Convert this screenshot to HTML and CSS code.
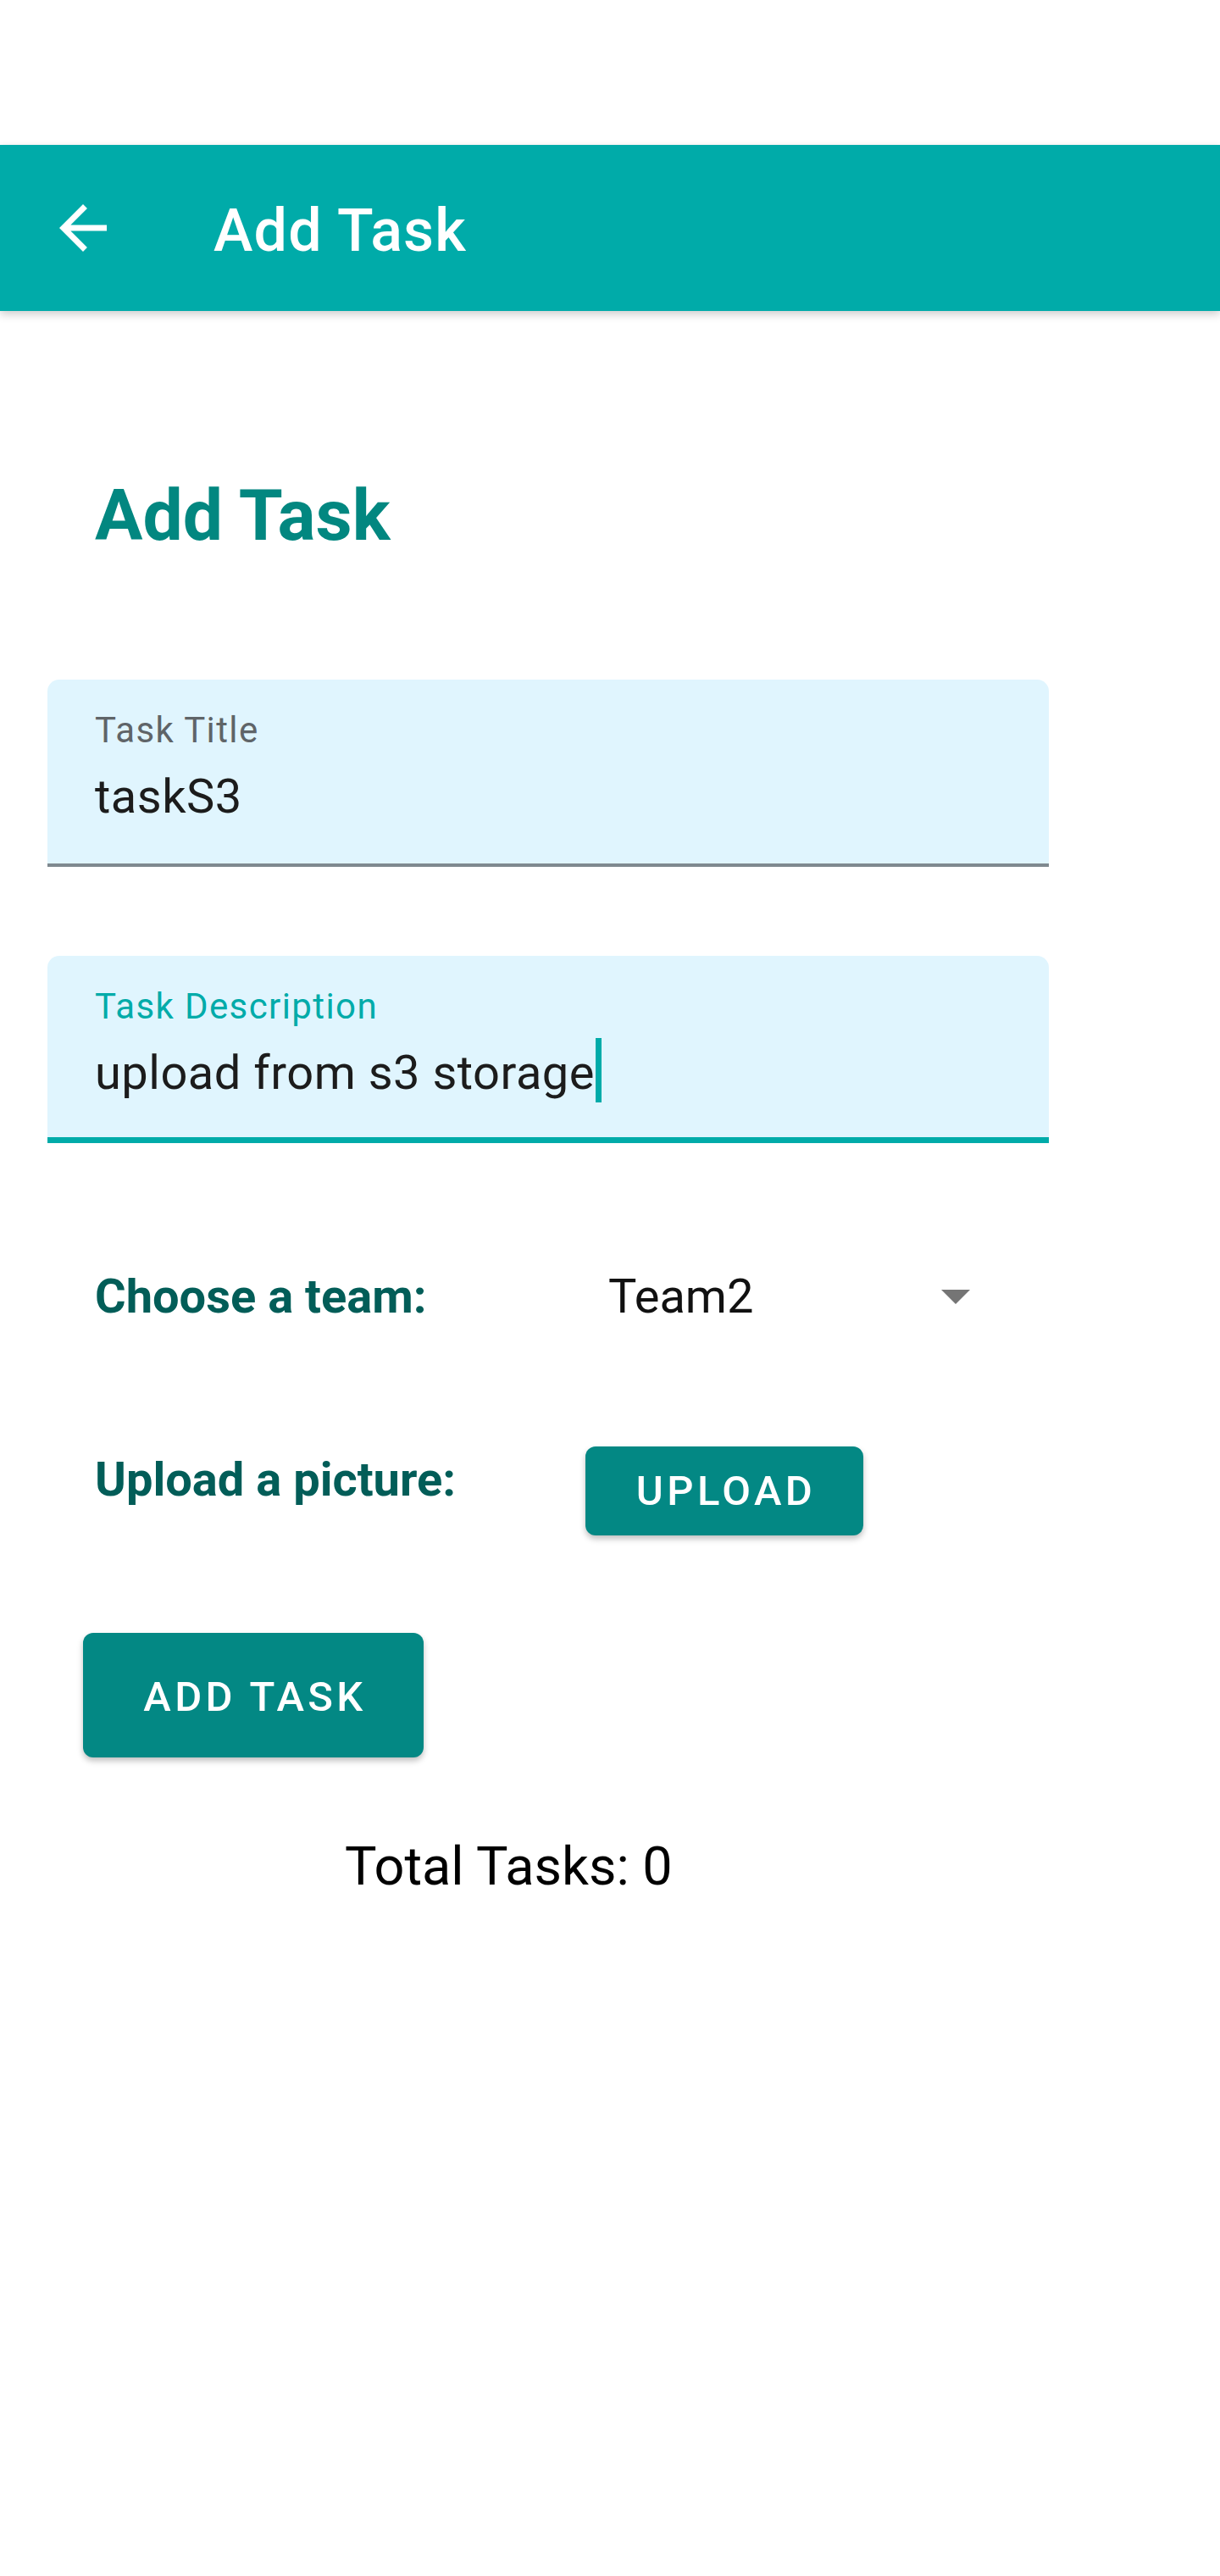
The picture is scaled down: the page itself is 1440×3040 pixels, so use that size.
FILE: index.html
```html
<!DOCTYPE html>
<html lang="en">
<head>
<meta charset="utf-8">
<title>Add Task</title>
<link rel="stylesheet" href="styles.css">
</head>
<body>
<div class="status"></div>
<header class="appbar">
  <svg class="back" viewBox="0 0 24 24" aria-hidden="true"><path d="M20 11H7.83l5.59-5.59L12 4l-8 8 8 8 1.41-1.41L7.83 13H20v-2z"/></svg>
  <span class="appbar-title">Add Task</span>
</header>
<main class="content">
  <h1 class="heading">Add Task</h1>
  <div class="field">
    <span class="field-label">Task Title</span>
    <div class="field-value">taskS3</div>
  </div>
  <div class="field focused">
    <span class="field-label">Task Description</span>
    <div class="field-value"><span class="typed">upload from s3 storage</span></div>
  </div>
  <div class="row team-row">
    <span class="row-label team-label">Choose a team:</span>
    <div class="select"><span class="select-value">Team2</span><span class="caret-down"></span></div>
  </div>
  <div class="row upload-row">
    <span class="row-label upload-label">Upload a picture:</span>
    <button class="btn btn-upload">Upload</button>
  </div>
  <button class="btn btn-add">Add Task</button>
  <p class="total">Total Tasks: 0</p>
</main>
</body>
</html>
```
FILE: styles.css
```css
html, body {
  margin: 0;
  padding: 0;
  background: #ffffff;
}

body {
  font-family: Roboto, "Noto Sans", "Liberation Sans", sans-serif;
  width: 1440px;
  min-height: 3040px;
}

.status {
  height: 171px;
  background: #ffffff;
}

.appbar {
  position: relative;
  z-index: 1;
  height: 196px;
  background: #00aba9;
  display: flex;
  align-items: center;
  box-shadow: 0 4px 10px rgba(0, 0, 0, 0.2);
}

.back {
  width: 84px;
  height: 84px;
  margin-left: 56px;
  fill: #ffffff;
  flex: none;
}

.appbar-title {
  margin-left: 112px;
  margin-top: 6px;
  font-size: 70px;
  line-height: 70px;
  font-weight: 500;
  letter-spacing: 1.2px;
  color: #ffffff;
}

.content {
  padding: 0 202px 0 56px;
}

.heading {
  margin: 200px 0 0 56px;
  font-size: 84px;
  line-height: 84px;
  font-weight: 700;
  color: #028780;
}

.field {
  margin-top: 151px;
  height: 221px;
  box-sizing: border-box;
  background: #e0f5fe;
  border-radius: 14px 14px 0 0;
  border-bottom: 4px solid #7f898f;
  padding: 39px 0 0 56px;
}

.field-label {
  display: block;
  font-size: 42px;
  line-height: 42px;
  letter-spacing: 1.4px;
  color: #5f6468;
}

.field-value {
  margin-top: 29px;
  font-size: 56px;
  line-height: 56px;
  letter-spacing: 0.5px;
  color: #1c1c1c;
}

.field.focused {
  margin-top: 105px;
  border-bottom: 7px solid #00aba9;
}

.field.focused .field-label {
  color: #00aba9;
}

.typed {
  position: relative;
}

.typed::after {
  content: "";
  position: absolute;
  left: 100%;
  margin-left: 1px;
  top: -8px;
  width: 7px;
  height: 76px;
  background: #00aba9;
}

.row {
  display: flex;
  padding-left: 56px;
}

.row-label {
  font-size: 56px;
  line-height: 56px;
  font-weight: 700;
  color: #025d58;
}

.team-row {
  margin-top: 153px;
  align-items: center;
}

.team-label {
  flex: 0 0 606px;
}

.select {
  display: flex;
  align-items: center;
  justify-content: space-between;
  width: 427px;
  font-size: 56px;
  line-height: 56px;
  color: #111111;
}

.caret-down {
  width: 0;
  height: 0;
  border-left: 17px solid transparent;
  border-right: 17px solid transparent;
  border-top: 17px solid #757575;
}

.upload-row {
  margin-top: 149px;
  align-items: flex-start;
}

.upload-label {
  flex: 0 0 579px;
  margin-top: 11px;
}

.btn {
  display: flex;
  align-items: center;
  justify-content: center;
  border: none;
  padding: 0 0 0 4px;
  background: #038884;
  color: #ffffff;
  font-family: Roboto, "Noto Sans", "Liberation Sans", sans-serif;
  font-size: 49px;
  line-height: 49px;
  font-weight: 500;
  letter-spacing: 4.4px;
  text-transform: uppercase;
  border-radius: 12px;
  box-shadow: 0 4px 7px rgba(0, 0, 0, 0.25);
}

.btn-upload {
  width: 328px;
  height: 105px;
}

.btn-add {
  margin: 115px 0 0 42px;
  width: 402px;
  height: 147px;
  padding-top: 3px;
}

.total {
  margin: 97px 0 0 351px;
  font-size: 63px;
  line-height: 63px;
  color: #000000;
}
```
